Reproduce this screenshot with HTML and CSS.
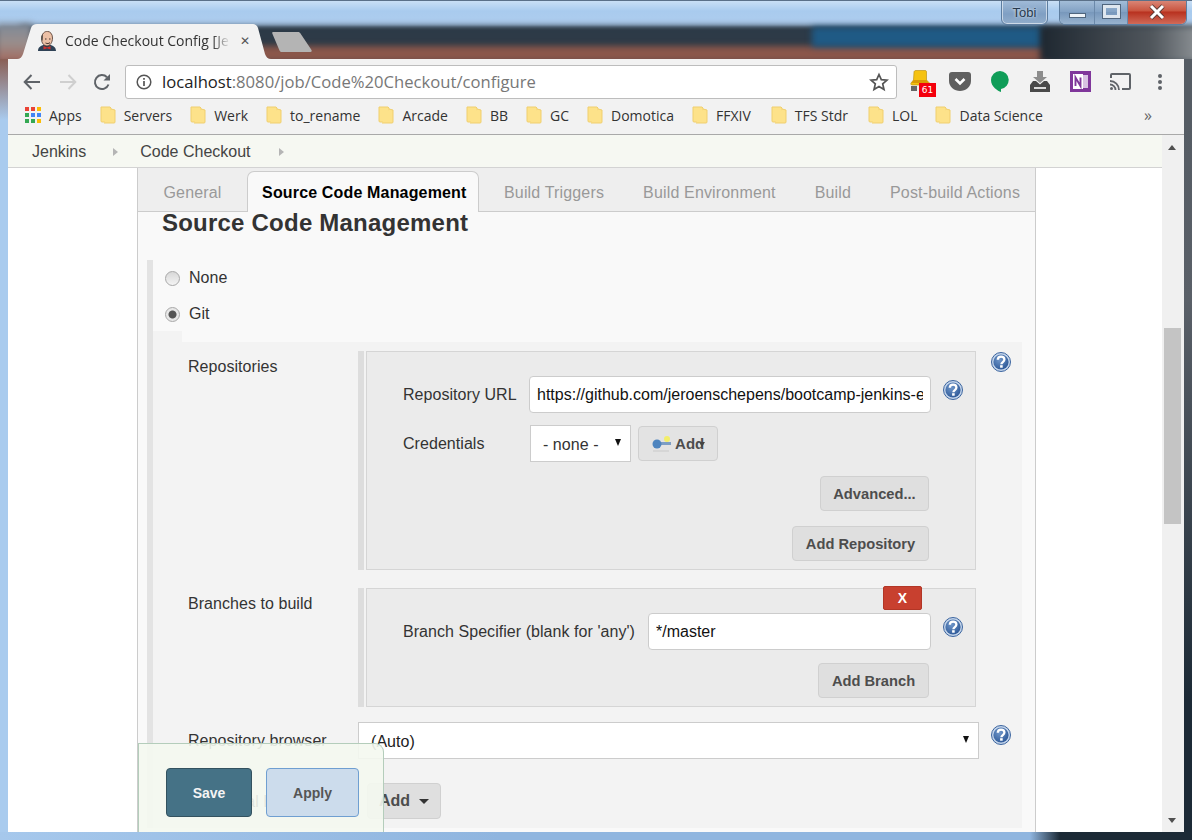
FILE: index.html
```html
<!DOCTYPE html>
<html lang="en">
<head>
    <meta charset="UTF-8">
    <title>Code Checkout Config [Jenkins]</title>
    <link rel="stylesheet" href="styles.css">
</head>
<body>
<svg class="svg-defs" width="0" height="0">
    <defs>
        <symbol id="folder" viewBox="0 0 16 18">
            <path d="M1 1h9l1 1v14H2a1 1 0 0 1-1-1z" fill="#fde28a" stroke="#f0cf6e"/>
            <path d="M11 3l4 1v12a1 1 0 0 1-1 1H4" fill="#fde28a" stroke="#f0cf6e"/>
        </symbol>
        <radialGradient id="helpfill" cx="0.4" cy="0.35" r="0.8">
            <stop offset="0" stop-color="#6f96c9"/>
            <stop offset="1" stop-color="#234f90"/>
        </radialGradient>
        <symbol id="help" viewBox="0 0 20 20">
            <circle cx="10" cy="10" r="9.500" fill="#c3d4ea" stroke="#3c659f"/>
            <circle cx="10" cy="10" r="7.600" fill="url(#helpfill)"/>
            <path d="M6.800 7.800c0-4.200 6.600-4 6.600-.2 0 2.500-3 2.400-3 4.600" fill="none" stroke="#fff" stroke-width="2.300"/>
            <rect x="9.100" y="13.200" width="2.600" height="2.500" fill="#fff"/>
        </symbol>
    </defs>
</svg>

<div class="window">
    <div class="titlebar">
        <div class="blur blur-dark"></div>
        <div class="blur blur-red"></div>
        <div class="blur blur-blue"></div>
        <div class="blur blur-side"></div>
        <div class="blur blur-left"></div>

        <div class="tab">
            <svg class="tab-shape" width="254" height="35" viewBox="0 0 254 35">
                <path d="M0 35C3 35 5 33 6 30L14 4C15 1 17 0 20 0H235C238 0 240 1 241 4L248 30C249 33 251 35 254 35Z" fill="#f2f2f2"/>
            </svg>
            <svg class="favicon" width="18" height="20" viewBox="0 0 18 20">
                <path d="M0 20c0-4 3-5 5-6h8c2 1 5 2 5 6z" fill="#2f4256"/>
                <path d="M3.500 8c0-10 11-10 11-1 0 4.500-2.500 8-5.500 8S3.500 12 3.500 8z" fill="#ecc0a6" stroke="#4a332b" stroke-width=".8"/>
                <path d="M3.500 9c-1-3 0-4.500 1.500-5.500C5 5.500 5 8 4.500 10z" fill="#5d5550"/>
                <path d="M7 8h1.500M11 8h1.500M7.500 12c2 .8 3 .8 4.500-.4" stroke="#33231d" stroke-width=".9" fill="none"/>
                <path d="M5.500 15l3.500 1.500L12.500 15v3.500L9 17.200l-3.500 1.300z" fill="#d4302c"/>
            </svg>
            <span class="tab-title">Code Checkout Config [Jenkins]</span>
            <span class="tab-close">&#x2715;</span>
        </div>
        <svg class="new-tab" width="40" height="20" viewBox="0 0 40 20">
            <path d="M1 0h25c1 0 2 .5 2.500 1.500L39.500 18c.5 1 0 2-1 2H10c-1 0-2-.5-2.500-1.500L.3 1.500C0 .5 .5 0 1 0z" fill="#b4b4b4"/>
        </svg>

        <div class="user-badge">Tobi</div>
        <div class="win-buttons">
            <div class="win-btn win-min"><span class="min-glyph"></span></div>
            <div class="win-btn win-max"><span class="max-glyph"></span></div>
            <div class="win-btn win-close">
                <svg width="18" height="16" viewBox="0 0 18 16"><path d="M3 2l12 12M15 2L3 14" stroke="#5a3a36" stroke-width="4.600"/><path d="M3 2l12 12M15 2L3 14" stroke="#fff" stroke-width="3"/></svg>
            </div>
        </div>
    </div>

    <div class="browser">
        <div class="toolbar">
            <svg class="nav-icon" width="20" height="20" viewBox="0 0 20 20"><path d="M18 10H3M9.500 3L2.700 10l6.800 7" fill="none" stroke="#5f6368" stroke-width="2"/></svg>
            <svg class="nav-icon" width="20" height="20" viewBox="0 0 20 20"><path d="M2 10h15M10.500 3l6.800 7-6.800 7" fill="none" stroke="#cfcfcf" stroke-width="2"/></svg>
            <svg class="nav-icon" width="20" height="20" viewBox="0 0 20 20"><path d="M16.500 12.500A7 7 0 1 1 15 5.200" fill="none" stroke="#5f6368" stroke-width="2"/><path d="M11.500 8.500H18V2z" fill="#5f6368"/></svg>
            <div class="omnibox">
                <svg width="16" height="16" viewBox="0 0 16 16"><circle cx="8" cy="8" r="6.800" fill="none" stroke="#555" stroke-width="1.500"/><path d="M8 7v5M8 4v1.800" stroke="#555" stroke-width="1.700"/></svg>
                <span class="url"><span class="url-host">localhost</span>:8080/job/Code%20Checkout/configure</span>
                <svg class="star" width="20" height="20" viewBox="0 0 20 20"><path d="M10 2.500l2.300 5.200 5.700.5-4.300 3.700 1.300 5.600-5-3-5 3 1.300-5.600L2 8.200l5.700-.5z" fill="none" stroke="#555" stroke-width="1.700"/></svg>
            </div>
            <div class="extensions">
                <div class="ext ext-badge">
                    <svg width="22" height="24" viewBox="0 0 22 24">
                        <path d="M5 2c0-1 1-1.500 2-1.500h9c1 0 1.500 .5 1.500 1.500v8l3 3c.5 1 0 2-1 2H3c-1 0-1.500-1-1-2l2.500-3z" fill="#f5c211" stroke="#b58a08" stroke-width=".6"/>
                        <path d="M4.500 10h13l2 3h-17z" fill="#d99a06"/>
                        <rect x="2" y="16" width="6" height="5" fill="#666"/>
                    </svg>
                    <span class="badge">61</span>
                </div>
                <div class="ext">
                    <svg width="22" height="19" viewBox="0 0 22 19"><path d="M0 3c0-2 1-3 3-3h16c2 0 3 1 3 3v6c0 6-5.500 10-11 10S0 15 0 9z" fill="#606060"/><path d="M6.500 7l4.500 4.500L15.500 7" fill="none" stroke="#fff" stroke-width="2.600"/></svg>
                </div>
                <div class="ext">
                    <svg width="18" height="21" viewBox="0 0 18 21"><path d="M9 0a9 9 0 0 1 1 17.900V21C7 20 0 16 0 9a9 9 0 0 1 9-9z" fill="#0f9d58"/></svg>
                </div>
                <div class="ext">
                    <svg width="20" height="21" viewBox="0 0 20 21"><path d="M7 0h6v6h4l-7 6-7-6h4z" fill="#8d8d8d"/><path d="M3 10h3l4 3.500 4-3.500h3l3 4v7H0v-7z" fill="#4a4a4a"/><rect x="4" y="16" width="12" height="2" fill="#dcdcdc"/></svg>
                </div>
                <div class="ext">
                    <svg width="21" height="21" viewBox="0 0 21 21"><rect width="21" height="21" fill="#80379b"/><rect x="11" y="4" width="7" height="13" fill="#d9c3e3"/><rect x="3" y="3" width="10" height="15" fill="#fff"/><path d="M5.500 15V6.500l5 8.500V6.500" fill="none" stroke="#80379b" stroke-width="1.900"/></svg>
                </div>
                <div class="ext">
                    <svg width="21" height="17" viewBox="0 0 21 17"><path d="M1 5V2a1 1 0 0 1 1-1h17a1 1 0 0 1 1 1v13a1 1 0 0 1-1 1h-7" fill="none" stroke="#5f6368" stroke-width="2"/><path d="M0 8a9 9 0 0 1 9 9M0 11.500A5.500 5.500 0 0 1 5.500 17" fill="none" stroke="#5f6368" stroke-width="1.800"/><circle cx="1.500" cy="15.500" r="1.500" fill="#5f6368"/></svg>
                </div>
                <div class="ext">
                    <svg width="6" height="18" viewBox="0 0 6 18"><circle cx="3" cy="3" r="2" fill="#5f6368"/><circle cx="3" cy="9" r="2" fill="#5f6368"/><circle cx="3" cy="15" r="2" fill="#5f6368"/></svg>
                </div>
            </div>
        </div>

        <div class="bookmarks">
            <div class="bookmark bookmark-apps">
                <svg width="16" height="16" viewBox="0 0 16 16">
                    <rect width="4" height="4" fill="#ea4335"/><rect x="6" width="4" height="4" fill="#ea4335"/><rect x="12" width="4" height="4" fill="#fbbc05"/>
                    <rect y="6" width="4" height="4" fill="#34a853"/><rect x="6" y="6" width="4" height="4" fill="#4285f4"/><rect x="12" y="6" width="4" height="4" fill="#4285f4"/>
                    <rect y="12" width="4" height="4" fill="#34a853"/><rect x="6" y="12" width="4" height="4" fill="#34a853"/><rect x="12" y="12" width="4" height="4" fill="#fbbc05"/>
                </svg>
                Apps
            </div>
            <div class="bookmark"><svg width="16" height="18"><use href="#folder"/></svg>Servers</div>
            <div class="bookmark"><svg width="16" height="18"><use href="#folder"/></svg>Werk</div>
            <div class="bookmark"><svg width="16" height="18"><use href="#folder"/></svg>to_rename</div>
            <div class="bookmark"><svg width="16" height="18"><use href="#folder"/></svg>Arcade</div>
            <div class="bookmark"><svg width="16" height="18"><use href="#folder"/></svg>BB</div>
            <div class="bookmark"><svg width="16" height="18"><use href="#folder"/></svg>GC</div>
            <div class="bookmark"><svg width="16" height="18"><use href="#folder"/></svg>Domotica</div>
            <div class="bookmark bookmark-wide"><svg width="16" height="18"><use href="#folder"/></svg>FFXIV</div>
            <div class="bookmark bookmark-wide"><svg width="16" height="18"><use href="#folder"/></svg>TFS Stdr</div>
            <div class="bookmark"><svg width="16" height="18"><use href="#folder"/></svg>LOL</div>
            <div class="bookmark"><svg width="16" height="18"><use href="#folder"/></svg>Data Science</div>
            <span class="more">&raquo;</span>
        </div>

        <div class="viewport">
            <div class="page">
                <div class="breadcrumbs">
                    <span class="crumb">Jenkins</span><span class="crumb-arrow"></span>
                    <span class="crumb">Code Checkout</span><span class="crumb-arrow"></span>
                </div>

                <div class="config">
                    <div class="config-tabs">
                        <span class="config-tab">General</span>
                        <span class="config-tab active">Source Code Management</span>
                        <span class="config-tab">Build Triggers</span>
                        <span class="config-tab">Build Environment</span>
                        <span class="config-tab">Build</span>
                        <span class="config-tab">Post-build Actions</span>
                    </div>

                    <h3 class="section-title">Source Code Management</h3>

                    <div class="scm-list">
                        <div class="radio-row"><span class="radio"></span>None</div>
                        <div class="radio-row"><span class="radio checked"></span>Git</div>

                        <div class="git-body">
                            <div class="form-row repos-row">
                                <div class="form-label">Repositories</div>
                                <div class="chunk">
                                    <div class="chunk-box repo-box">
                                        <div class="field-row url-row">
                                            <span class="field-label url-label">Repository URL</span>
                                            <input class="text-input url-input" type="text" value="https://github.com/jeroenschepens/bootcamp-jenkins-example">
                                            <svg class="help" width="20" height="20"><use href="#help"/></svg>
                                        </div>
                                        <div class="field-row cred-row">
                                            <span class="field-label url-label">Credentials</span>
                                            <div class="select-box cred-select">- none -<span class="select-arrow"></span></div>
                                            <div class="btn cred-add">
                                                <svg width="20" height="20" viewBox="0 0 20 20"><circle cx="15" cy="5" r="3" fill="#f3ee6a"/><rect x="5" y="8" width="14" height="3" fill="#7d9ec4"/><circle cx="5" cy="10" r="4.500" fill="#4f85bf"/><rect x="1" y="16" width="16" height="2" fill="#d6d6d6"/></svg>
                                                <span>Add</span><span class="add-caret"></span>
                                            </div>
                                        </div>
                                        <div class="btn-row"><button class="btn advanced-btn" type="button">Advanced...</button></div>
                                        <div class="btn-row"><button class="btn repo-btn" type="button">Add Repository</button></div>
                                    </div>
                                </div>
                                <svg class="help repos-help" width="20" height="20"><use href="#help"/></svg>
                            </div>

                            <div class="form-row branch-row">
                                <div class="form-label">Branches to build</div>
                                <div class="chunk">
                                    <div class="chunk-box branch-box">
                                        <button class="delete-btn" type="button">X</button>
                                        <div class="field-row branch-field">
                                            <span class="field-label branch-label">Branch Specifier (blank for 'any')</span>
                                            <input class="text-input branch-input" type="text" value="*/master">
                                            <svg class="help" width="20" height="20"><use href="#help"/></svg>
                                        </div>
                                        <div class="btn-row"><button class="btn branch-btn" type="button">Add Branch</button></div>
                                    </div>
                                </div>
                            </div>

                            <div class="form-row browser-row">
                                <div class="form-label">Repository browser</div>
                                <div class="select-box browser-select">(Auto)<span class="select-arrow"></span></div>
                                <svg class="help browser-help" width="20" height="20"><use href="#help"/></svg>
                            </div>

                            <div class="form-row behaviours-row">
                                <div class="form-label">Additional Behaviours</div>
                                <button class="btn behaviours-btn" type="button">Add<span class="btn-caret"></span></button>
                            </div>
                        </div>
                    </div>
                </div>

                <div class="bottom-bar">
                    <button class="save-btn" type="button">Save</button>
                    <button class="apply-btn" type="button">Apply</button>
                </div>
            </div>

            <div class="scrollbar">
                <span class="scroll-up"></span>
                <div class="scroll-track"><div class="scroll-thumb"></div></div>
                <span class="scroll-down"></span>
            </div>
        </div>
    </div>
</div>
</body>
</html>
```

FILE: styles.css
```css
* {
    box-sizing: border-box;
}
html, body {
    margin: 0;
    padding: 0;
    height: 100%;
}
body {
    width: 1192px;
    height: 840px;
    overflow: hidden;
    font-family: "Liberation Sans", Arial, sans-serif;
    color: #333;
}
.svg-defs {
    position: absolute;
}
button {
    font-family: inherit;
}

/* window frame */
.window {
    width: 1192px;
    height: 840px;
    padding: 0 8px 8px;
    display: flex;
    flex-direction: column;
    background-color: #a9cbee;
    background-image:
        linear-gradient(90deg, #a6c8ec 0, #8fb5df 500px, #8fb5df 1030px, #1c2a36 1060px),
        linear-gradient(180deg, #8a5f55 59px, #a9cbee 120px),
        linear-gradient(180deg, #555c64 120px, #5a6068 300px, #1c2a36 700px);
    background-size: 100% 8px, 8px 100%, 8px 100%;
    background-position: left bottom, left top, right top;
    background-repeat: no-repeat;
    overflow: hidden;
}
.titlebar {
    position: relative;
    height: 59px;
    margin: 0 -8px;
    flex: none;
    overflow: hidden;
    border-top: 1px solid #5b7088;
    background: linear-gradient(180deg, #c9dff5 0, #a9cbee 10px, #aecdee 24px, #2e3b48 30px);
}
.blur {
    position: absolute;
    filter: blur(3px);
}
.blur-dark {
    left: 20px;
    top: 25px;
    width: 1182px;
    height: 22px;
    background: #2d3a47;
}
.blur-red {
    left: 20px;
    top: 45px;
    width: 1028px;
    height: 16px;
    background: #8b564a;
}
.blur-blue {
    left: 812px;
    top: 26px;
    width: 232px;
    height: 20px;
    background: #1f5a85;
}
.blur-side {
    left: 1040px;
    top: 25px;
    width: 160px;
    height: 36px;
    background: linear-gradient(90deg, #1e2730, #50565c 70%, #8f9498);
}
.blur-left {
    left: -4px;
    top: 22px;
    width: 36px;
    height: 40px;
    background: linear-gradient(180deg, #7c8a99, #9a8e8c 50%, #a4665a);
}
.tab {
    position: absolute;
    left: 17px;
    top: 23px;
    width: 254px;
    height: 35px;
    display: flex;
    align-items: center;
    padding: 0 0 2px 21px;
    font-family: "Open Sans", sans-serif;
    font-size: 14px;
    color: #333;
}
.tab-shape {
    position: absolute;
    left: 0;
    top: 0;
}
.favicon {
    position: relative;
    flex: none;
}
.tab-title {
    position: relative;
    margin-left: 9px;
    width: 165px;
    white-space: nowrap;
    overflow: hidden;
    -webkit-mask-image: linear-gradient(90deg, #000 148px, transparent 165px);
    mask-image: linear-gradient(90deg, #000 148px, transparent 165px);
}
.tab-close {
    position: relative;
    margin-left: 10px;
    font-size: 12px;
    color: #555;
}
.new-tab {
    position: absolute;
    left: 272px;
    top: 31px;
}
.user-badge {
    position: absolute;
    left: 1001px;
    top: -3px;
    width: 47px;
    height: 27px;
    border: 1px solid #5d7d9f;
    border-radius: 0 0 6px 6px;
    background: linear-gradient(180deg, #a5bfdb, #7f9fc3 60%, #92aecb);
    box-shadow: inset 0 0 0 1px rgba(255, 255, 255, .55);
    color: #26394d;
    font-size: 13px;
    line-height: 27px;
    text-align: center;
    text-shadow: 0 0 3px #fff;
}
.win-buttons {
    position: absolute;
    left: 1059px;
    top: -3px;
    display: flex;
    height: 27px;
    width: 128px;
    border: 1px solid #5d7d9f;
    border-radius: 0 0 6px 6px;
    overflow: hidden;
    box-shadow: inset 0 0 0 1px rgba(255, 255, 255, .55);
}
.win-btn {
    display: flex;
    align-items: center;
    justify-content: center;
    background: linear-gradient(180deg, #a9c2dc, #83a2c4 50%, #7797bb 52%, #98b3cf);
    border-right: 1px solid #6b89aa;
}
.win-min {
    width: 35px;
}
.win-max {
    width: 33px;
}
.win-close {
    flex: 1;
    border-right: 0;
    background: linear-gradient(180deg, #dc8f80, #c9543f 48%, #b8311f 52%, #d06a58);
}
.min-glyph {
    width: 17px;
    height: 5px;
    margin-top: 8px;
    background: #eef3f8;
    border: 1px solid #50667e;
}
.max-glyph {
    width: 17px;
    height: 13px;
    border: 3px solid #dfe7ef;
    outline: 1px solid #50667e;
}

/* browser chrome */
.browser {
    flex: 1;
    min-height: 0;
    display: flex;
    flex-direction: column;
    background: #f2f2f2;
}
.toolbar {
    height: 41px;
    flex: none;
    display: flex;
    align-items: center;
    padding: 4px 0 0 14px;
}
.nav-icon {
    margin-right: 16px;
}
.nav-icon + .nav-icon {
    margin-right: 14px;
}
.nav-icon + .nav-icon + .nav-icon {
    margin-right: 13px;
}
.omnibox {
    width: 772px;
    height: 34px;
    display: flex;
    align-items: center;
    padding: 0 7px 0 10px;
    background: #fff;
    border: 1px solid #bdbdbd;
    border-radius: 3px;
    font-family: "Open Sans", sans-serif;
    font-size: 16.65px;
    color: #777;
}
.url {
    margin-left: 10px;
    flex: 1;
    white-space: nowrap;
}
.url-host {
    color: #222;
}
.extensions {
    display: flex;
    align-items: center;
    margin-left: 3px;
    flex: 1;
}
.ext {
    position: relative;
    width: 40px;
    display: flex;
    justify-content: center;
}
.badge {
    position: absolute;
    left: 19px;
    top: 13px;
    width: 17px;
    height: 14px;
    background: #f4000d;
    color: #fff;
    font-family: "DejaVu Sans", sans-serif;
    font-size: 9px;
    line-height: 14px;
    text-align: center;
}
.bookmarks {
    height: 35px;
    flex: none;
    display: flex;
    align-items: center;
    gap: 18px;
    padding: 0 0 4px 17px;
    border-bottom: 1px solid #a9a9a9;
    font-family: "Open Sans", sans-serif;
    font-size: 14px;
    color: #333;
}
.bookmark {
    display: flex;
    align-items: center;
    gap: 8px;
    white-space: nowrap;
}
.bookmark-wide {
    margin-right: 2px;
}
.more {
    margin-left: auto;
    margin-right: 32px;
    font-size: 16px;
    color: #666;
}

/* page */
.viewport {
    flex: 1;
    min-height: 0;
    display: flex;
}
.page {
    position: relative;
    flex: 1;
    min-width: 0;
    overflow: hidden;
    background: #fff;
}
.breadcrumbs {
    height: 33px;
    display: flex;
    align-items: center;
    padding: 2px 0 0 24px;
    background: #f6f8f2;
    border-bottom: 1px solid #d3d3d3;
    font-size: 16px;
    color: #444;
}
.crumb-arrow {
    width: 0;
    height: 0;
    margin: 0 22px 0 27px;
    border-left: 5px solid #b5b5b5;
    border-top: 4px solid transparent;
    border-bottom: 4px solid transparent;
}
.crumb-arrow:last-child {
    margin-left: 28px;
}
.config {
    width: 899px;
    margin-left: 129px;
    background: #f9f9f9;
    border-left: 1px solid #ccc;
    border-right: 1px solid #ccc;
    height: 720px;
}
.config-tabs {
    height: 44px;
    display: flex;
    align-items: flex-end;
    padding-left: 6px;
    background: #eee;
    border-bottom: 1px solid #ccc;
    font-size: 16px;
    letter-spacing: .16px;
}
.config-tab {
    height: 38px;
    line-height: 40px;
    padding: 0 19.5px;
    color: #999;
    white-space: nowrap;
}
.config-tab.active {
    height: 41px;
    margin: 0 6px -1px 6px;
    padding: 0 11px 0 14px;
    line-height: 42px;
    background: #f9f9f9;
    border: 1px solid #ccc;
    border-bottom: 0;
    border-radius: 7px 7px 0 0;
    color: #000;
    font-weight: bold;
}
.section-title {
    margin: 0;
    height: 48px;
    padding-left: 24px;
    font-size: 24px;
    line-height: 22px;
    letter-spacing: .22px;
    color: #333;
    font-weight: bold;
}
.scm-list {
    position: relative;
    margin-left: 9px;
    margin-right: 13px;
    border-left: 6px solid #e3e3e3;
    font-size: 16px;
    letter-spacing: .05px;
}
.radio-row {
    height: 36px;
    display: flex;
    align-items: center;
    padding-left: 12px;
}
.radio {
    width: 15px;
    height: 15px;
    margin-right: 9px;
    border-radius: 50%;
    border: 1px solid #a8a8a8;
    background: linear-gradient(180deg, #d8d8d8, #f4f4f4);
}
.radio.checked {
    background: radial-gradient(circle, #555 0, #555 3.500px, #e8e8e8 4.500px);
}
.git-body {
    position: relative;
    margin-top: 10px;
    padding-top: 9px;
    background: #f3f3f3;
    height: 486px;
}
.git-body::before {
    content: "";
    position: absolute;
    left: 0;
    top: -11px;
    width: 29px;
    height: 11px;
    background: #f3f3f3;
}
.form-row {
    display: flex;
    align-items: flex-start;
}
.form-label {
    width: 205px;
    flex: none;
    padding: 1px 0 0 35px;
    line-height: 30px;
}
.chunk {
    width: 618px;
    flex: none;
    padding-left: 2px;
    border-left: 6px solid #ddd;
}
.chunk-box {
    position: relative;
    background: #ebebeb;
    border: 1px solid #d5d5d5;
}
.repo-box {
    height: 219px;
    padding-top: 24px;
}
.branch-row {
    margin-top: 18px;
}
.branch-box {
    height: 119px;
    padding-top: 24px;
}
.field-row {
    display: flex;
    align-items: center;
    padding-left: 36px;
}
.field-label {
    flex: none;
}
.url-label {
    width: 126px;
}
.text-input {
    height: 37px;
    padding: 0 7px;
    background: #fff;
    border: 1px solid #ccc;
    border-radius: 4px;
    font-family: inherit;
    font-size: 16px;
    color: #111;
    outline: none;
}
.url-input {
    width: 402px;
}
.help {
    flex: none;
    margin-left: 12px;
    margin-top: -9px;
}
.cred-row {
    margin-top: 12px;
}
.select-box {
    position: relative;
    background: #fff;
    border: 1px solid #ccc;
    color: #333;
    font-size: 16px;
}
.select-arrow {
    position: absolute;
    right: 9px;
    top: 13px;
    border-top: 7px solid #111;
    border-left: 3.500px solid transparent;
    border-right: 3.500px solid transparent;
}
.cred-select {
    width: 101px;
    height: 37px;
    margin-left: 1px;
    padding-left: 12px;
    line-height: 37px;
}
.btn {
    height: 35px;
    padding: 0;
    background: #dfdfdf;
    border: 1px solid #d0d0d0;
    border-radius: 4px;
    color: #4d4d4d;
    font-size: 14.7px;
    font-weight: bold;
}
.cred-add {
    width: 80px;
    margin-left: 7px;
    display: flex;
    align-items: center;
    padding-left: 13px;
    gap: 3px;
    position: relative;
    background: #e3e3e3;
    font-size: 15px;
}
.add-caret {
    position: absolute;
    left: 60px;
    top: 15px;
    border-top: 5px solid #444;
    border-left: 3px solid transparent;
    border-right: 3px solid transparent;
}
.btn-row {
    display: flex;
    justify-content: flex-end;
    padding-right: 46px;
}
.advanced-btn {
    width: 109px;
    margin-top: 14px;
}
.repo-btn {
    width: 137px;
    margin-top: 15px;
}
.delete-btn {
    position: absolute;
    left: 516px;
    top: -3px;
    width: 39px;
    height: 24px;
    padding: 0;
    background: #c8402f;
    border: 1px solid #b23626;
    border-radius: 2px;
    color: #fff;
    font-size: 14px;
    font-weight: bold;
}
.branch-label {
    width: 245px;
}
.branch-input {
    width: 283px;
}
.branch-btn {
    width: 111px;
    margin-top: 13px;
}
.browser-row {
    margin-top: 15px;
}
.browser-row .form-label {
    line-height: 36px;
}
.browser-select {
    width: 621px;
    height: 37px;
    padding-left: 12px;
    line-height: 37px;
    color: #222;
    flex: none;
}
.repos-help {
    margin: 1px 0 0 15px;
}
.browser-help {
    margin: 3px 0 0 12px;
}
.behaviours-row {
    margin-top: 24px;
    align-items: center;
}
.behaviours-btn {
    width: 74px;
    height: 36px;
    margin-left: 9px;
    font-size: 16px;
}
.btn-caret {
    display: inline-block;
    margin-left: 9px;
    vertical-align: middle;
    border-top: 5px solid #333;
    border-left: 5px solid transparent;
    border-right: 5px solid transparent;
}

/* save / apply bar, floats over the form */
.bottom-bar {
    position: absolute;
    left: 130px;
    bottom: 0;
    width: 246px;
    height: 89px;
    display: flex;
    align-items: flex-start;
    gap: 14px;
    padding: 24px 0 0 27px;
    background: rgba(244, 248, 240, .9);
    border: 1px solid #b4cdbb;
    border-bottom: 0;
    border-radius: 0 9px 0 0;
}
.save-btn {
    width: 86px;
    height: 49px;
    background: #457286;
    border: 1px solid #33525f;
    border-radius: 4px;
    color: #f4f4f4;
    font-size: 14px;
    font-weight: bold;
}
.apply-btn {
    width: 93px;
    height: 49px;
    background: #ccdcec;
    border: 1px solid #6f9fd1;
    border-radius: 4px;
    color: #555;
    font-size: 14px;
    font-weight: bold;
}

/* scrollbar */
.scrollbar {
    width: 22px;
    flex: none;
    display: flex;
    flex-direction: column;
    align-items: center;
    padding-right: 2px;
    background: #f0f0f0;
}
.scroll-up,
.scroll-down {
    width: 0;
    height: 0;
    border-left: 4px solid transparent;
    border-right: 4px solid transparent;
}
.scroll-up {
    margin-top: 10px;
    border-bottom: 5px solid #505050;
}
.scroll-down {
    margin-bottom: 9px;
    border-top: 5px solid #505050;
}
.scroll-track {
    flex: 1;
    width: 100%;
    padding: 178px 1px 0 2px;
}
.scroll-thumb {
    height: 196px;
    background: #c4c4c4;
}
```
